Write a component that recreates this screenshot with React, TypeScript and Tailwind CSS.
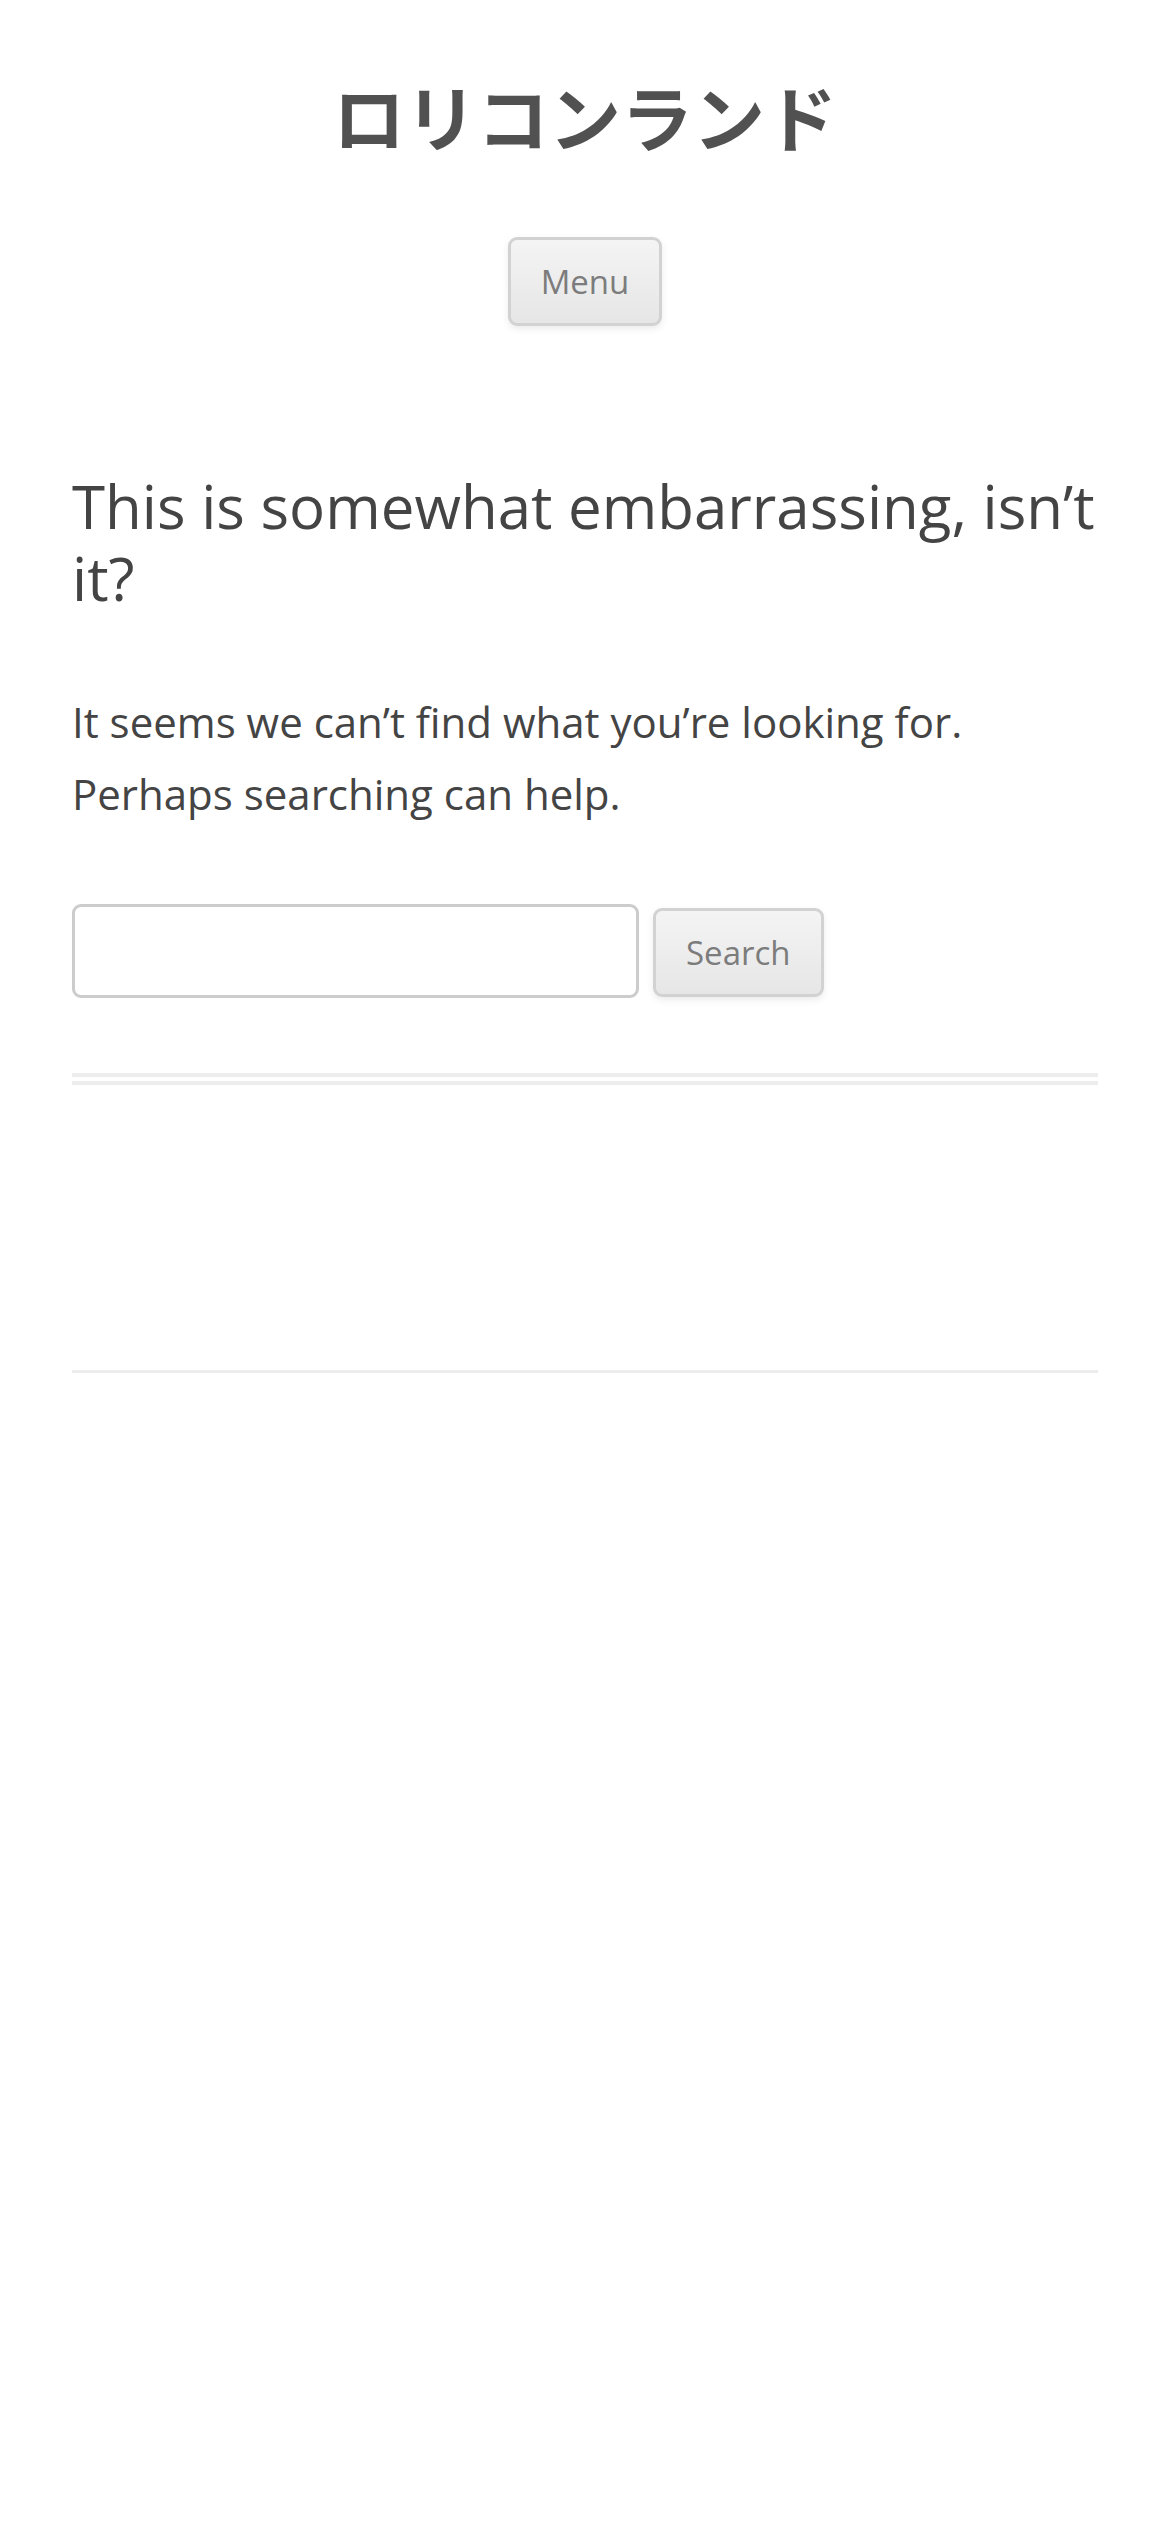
export default function App() {
  return (
    <div className="min-h-[2532px] bg-white px-[72px] font-['Open_Sans','Noto_Sans_CJK_JP',sans-serif] text-[#444]">
      <header className="pt-[72px] pb-[72px] text-center">
        <h1 className="text-[72px] leading-[92.6px] font-bold text-[#515151]">
          <a href="#">ロリコンランド</a>
        </h1>
        <nav className="mt-[72px]">
          <button className="rounded-[9px] border-[3px] border-[#d2d2d2] bg-gradient-to-b from-[#f4f4f4] to-[#e6e6e6] px-[30px] py-[18px] text-[33px] leading-[47px] text-[#7c7c7c] shadow-[0_3px_6px_rgba(64,64,64,0.1)]">
            Menu
          </button>
        </nav>
      </header>

      <main className="pt-[72px] pb-[213px]">
        <article className="mb-[72px] border-b-[12px] border-double border-[#ededed] pb-[75px]">
          <h1 className="mb-[72px] text-[60px] leading-[72px] font-normal">
            This is somewhat embarrassing, isn’t
            <br />
            it?
          </h1>
          <p className="mb-[72px] text-[42px] leading-[72px]">
            It seems we can’t find what you’re looking for.
            <br />
            Perhaps searching can help.
          </p>
          <form className="flex items-center gap-[14px] pt-[2px]" onSubmit={(e) => e.preventDefault()}>
            <input
              type="text"
              className="h-[94px] w-[567px] rounded-[9px] border-[3px] border-[#ccc] bg-white px-[18px] text-[42px] outline-none"
            />
            <button
              type="submit"
              className="mt-[3px] rounded-[9px] border-[3px] border-[#d2d2d2] bg-gradient-to-b from-[#f4f4f4] to-[#e6e6e6] px-[30px] py-[18px] text-[33px] leading-[47px] text-[#7c7c7c] shadow-[0_3px_6px_rgba(64,64,64,0.1)]"
            >
              Search
            </button>
          </form>
        </article>
      </main>

      <footer className="border-t-[3px] border-[#ededed] py-[72px]" />
    </div>
  );
}
